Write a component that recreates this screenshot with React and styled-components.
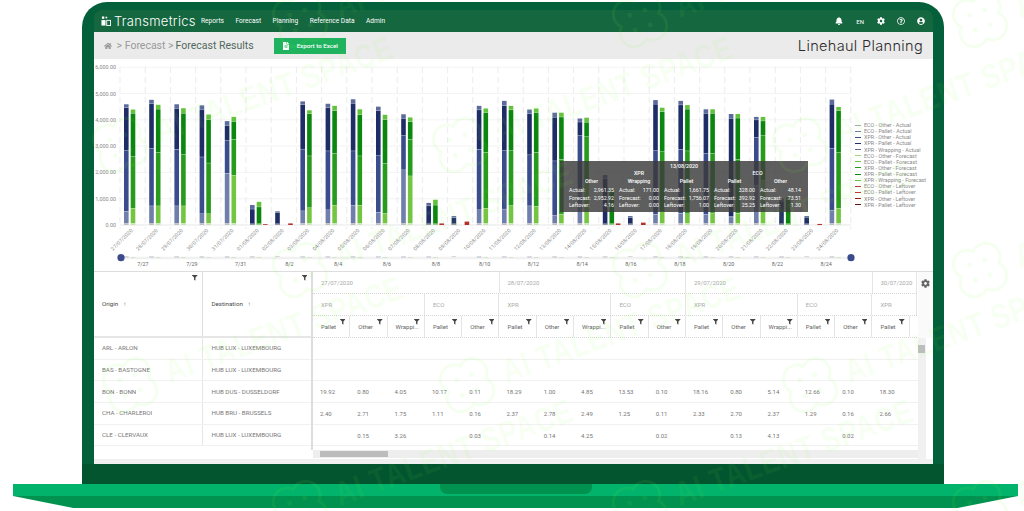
import React from 'react';
import styled, { createGlobalStyle } from 'styled-components';
import { FaBell, FaCog, FaUserCircle, FaHome, FaFileAlt, FaFilter, FaRegQuestionCircle } from 'react-icons/fa';

const GlobalStyle = createGlobalStyle`
  html, body { margin: 0; padding: 0; background: #fff; }
  body { font-family: Roboto, "Liberation Sans", sans-serif; }
  * { box-sizing: border-box; }
`;

const Page = styled.div`
  position: relative;
  width: 1024px;
  height: 511px;
  padding-top: 2px;
  overflow: hidden;
  background: #fff;
`;

const Laptop = styled.div`
  width: 862px;
  height: 482px;
  margin-left: 82px;
  padding: 8px 11px 0 12px;
  background: #03603a;
  border-radius: 25px 25px 0 0;
  border-bottom: 20px solid #03552f;
`;

const TopBar = styled.div`
  height: 22px;
  padding: 0 8px 0 7px;
  display: flex;
  align-items: center;
  color: #fff;
  background: #15673f;
  border-radius: 8px 8px 0 0;
`;

const Logo = styled.div`
  display: flex;
  align-items: center;
  gap: 3px;
  margin-right: 7px;
`;

const Brand = styled.span`
  font-family: Inter, sans-serif;
  font-weight: 300;
  font-size: 13px;
  letter-spacing: 0.3px;
  width: 80px;
`;

const NavLink = styled.span`
  font-size: 6.6px;
  font-weight: 400;
  margin-right: 11.5px;
`;

const TopIcons = styled.div`
  margin-left: auto;
  display: flex;
  align-items: center;
  gap: 12px;
  font-size: 8px;
  span { font-size: 6px; margin: 0 1px; }
`;

const Screen = styled.div`
  height: 432px;
  background: #fff;
  display: flex;
  flex-direction: column;
`;

const CrumbBar = styled.div`
  height: 27px;
  flex: none;
  padding: 0 10px 0 10px;
  background: #ebebeb;
  display: flex;
  align-items: center;
  font-size: 10.5px;
  color: #9a9a9a;
  gap: 2px;
`;

const CrumbCurrent = styled.span`
  color: #50695c;
`;

const ExportButton = styled.div`
  width: 72px;
  height: 16px;
  margin-left: 18px;
  padding-left: 8px;
  background: #1fb35f;
  color: #fff;
  display: flex;
  align-items: center;
  gap: 7px;
  font-size: 6.2px;
  font-weight: 500;
`;

const AppTitle = styled.div`
  margin-left: auto;
  font-family: Inter, sans-serif;
  font-weight: 300;
  font-size: 14.5px;
  letter-spacing: 0.35px;
  color: #2a2a2a;
`;

const ChartArea = styled.div`
  position: relative;
  flex: none;
  height: 213px;
  display: flex;
  border-bottom: 1px solid #ddd;
`;

const Legend = styled.ul`
  list-style: none;
  margin: 63px 0 0;
  padding: 0;
`;

const LegendItem = styled.li`
  display: flex;
  align-items: center;
  height: 6.13px;
  font-size: 5.4px;
  color: #8a8a8a;
  white-space: nowrap;
  &::before {
    content: '';
    width: 6px;
    height: 1px;
    margin-right: 3px;
    background: ${({ color }) => color};
  }
`;

const Tooltip = styled.div`
  position: absolute;
  left: 466px;
  top: 102px;
  width: 248px;
  height: 51px;
  padding: 2px 9px 0 9px;
  background: rgba(58, 58, 58, 0.82);
  color: #fff;
  font-size: 5.3px;
`;

const TooltipTitle = styled.div`
  text-align: center;
  font-weight: 500;
  height: 7px;
`;

const TooltipGroups = styled.div`
  display: flex;
  gap: 5px;
`;

const TooltipGroup = styled.div`
  text-align: center;
`;

const TooltipHead = styled.div`
  font-weight: 500;
  height: 8px;
`;

const TooltipSeries = styled.div`
  display: flex;
  gap: 5px;
`;

const TooltipCol = styled.div`
  width: ${({ width }) => width}px;
`;

const TooltipName = styled.div`
  font-weight: 500;
  height: 9px;
`;

const TooltipRow = styled.div`
  display: flex;
  justify-content: space-between;
  height: 7.6px;
`;

const TableArea = styled.div`
  flex: none;
  height: 187px;
  display: flex;
`;

const FrozenPane = styled.div`
  flex: none;
  width: 219px;
  height: 178px;
  border-right: 2px solid #ddd;
  display: flex;
  flex-direction: column;
`;

const FrozenHead = styled.div`
  display: flex;
  height: 66px;
  flex: none;
  border-bottom: 2px solid #e6e6e6;
`;

const FrozenHeadCell = styled.div`
  position: relative;
  width: 109px;
  padding-left: 8px;
  display: flex;
  align-items: center;
  gap: 5px;
  font-size: 6.2px;
  font-weight: 400;
  color: #4a4a4a;
  border-right: 1px solid #ddd;
  &:last-child { border-right: 0; padding-left: 9px; }
`;

const FilterMark = styled.span`
  position: absolute;
  top: 3px;
  right: 4px;
  font-size: 5.5px;
  color: #444;
  line-height: 1;
`;

const FrozenRow = styled.div`
  display: flex;
  height: 21.7px;
  flex: none;
  border-bottom: 1px solid #f1f1f1;
`;

const FrozenCell = styled.div`
  width: 109px;
  padding-left: 8px;
  display: flex;
  align-items: center;
  font-size: 6.2px;
  color: #777;
  border-right: 1px solid #e6e6e6;
  &:last-child { border-right: 0; padding-left: 9px; }
`;

const ScrollPane = styled.div`
  flex: none;
  width: 605px;
  overflow: hidden;
  display: flex;
  flex-direction: column;
`;

const HeadRow = styled.div`
  display: flex;
  flex: none;
  height: 22px;
  width: 620px;
  border-bottom: 1px dotted #d6d6d6;
`;

const SubHeadCell = styled.div`
  flex: none;
  width: ${({ span }) => span * 37.3}px;
  padding-left: 8px;
  display: flex;
  align-items: center;
  font-size: 6px;
  color: #aaa;
  border-right: 1px solid #e4e4e4;
`;

const ColHeadCell = styled.div`
  position: relative;
  flex: none;
  width: 37.3px;
  padding-left: 8px;
  display: flex;
  align-items: center;
  font-size: 6px;
  color: #666;
  border-right: 1px solid #e4e4e4;
`;

const BodyRow = styled.div`
  display: flex;
  flex: none;
  height: 21.7px;
  width: 620px;
  border-bottom: 1px solid #f1f1f1;
`;

const ValueCell = styled.div`
  flex: none;
  width: 37.3px;
  padding-left: 7px;
  display: flex;
  align-items: center;
  font-size: 6px;
  color: #777;
`;

const HScroll = styled.div`
  flex: none;
  height: 8px;
  margin-top: 4px;
  padding-left: 7px;
  background: #eeeeee;
`;

const HThumb = styled.div`
  width: 68px;
  height: 6px;
  margin-top: 1px;
  background: #bcbcbc;
`;

const SidePane = styled.div`
  flex: 1;
  display: flex;
  flex-direction: column;
`;

const SettingsCell = styled.div`
  height: 66px;
  flex: none;
  padding: 7px 0 0 3px;
  font-size: 9px;
  color: #666;
  background: #fafafa;
`;

const VScroll = styled.div`
  width: 8px;
  height: 121px;
  padding-top: 7px;
  background: #f1f1f1;
`;

const VThumb = styled.div`
  width: 7px;
  height: 8px;
  background: #bdbdbd;
`;

const BottomStrip = styled.div`
  flex: none;
  height: 5px;
  background: #f0f0f0;
`;

const BaseTop = styled.div`
  width: 1005px;
  height: 12px;
  margin-left: 13px;
  background: #02b36b;
  display: flex;
  justify-content: center;
`;

const Notch = styled.div`
  width: 152px;
  height: 10px;
  background: #02924f;
  border-radius: 0 0 7px 7px;
`;

const BaseBottom = styled.div`
  width: 1005px;
  height: 12px;
  margin-left: 13px;
  background: #02924f;
  clip-path: polygon(0 0, 100% 0, 94% 100%, 6% 100%);
`;

const Watermark = styled.div`
  position: absolute;
  left: ${({ x }) => x}px;
  top: ${({ y }) => y}px;
  display: flex;
  align-items: center;
  gap: 8px;
  transform: rotate(-20deg);
  transform-origin: 30px 30px;
  pointer-events: none;
  color: rgba(130, 255, 70, 0.08);
`;

const WatermarkText = styled.span`
  font-family: "Liberation Sans Narrow", "Liberation Sans", sans-serif;
  font-weight: 700;
  font-size: 34px;
  white-space: nowrap;
  letter-spacing: 1px;
  transform: scaleX(0.8);
  transform-origin: left center;
`;

const legend = [
  ['ECO - Other - Actual', '#a7a7b0'],
  ['ECO - Pallet - Actual', '#6f7eaa'],
  ['XPR - Other - Actual', '#3b4c8c'],
  ['XPR - Pallet - Actual', '#1f2d66'],
  ['XPR - Wrapping - Actual', '#5d6b9c'],
  ['ECO - Other - Forecast', '#9bd67a'],
  ['ECO - Pallet - Forecast', '#74c642'],
  ['XPR - Other - Forecast', '#279b1b'],
  ['XPR - Pallet - Forecast', '#0b860f'],
  ['XPR - Wrapping - Forecast', '#63c23c'],
  ['ECO - Other - Leftover', '#b5402f'],
  ['ECO - Pallet - Leftover', '#c0392b'],
  ['XPR - Other - Leftover', '#8c1d18'],
  ['XPR - Pallet - Leftover', '#5c1512']
];

const navyColors = ['#a7a7b0', '#6f7eaa', '#3b4c8c', '#1f2d66', '#5d6b9c'];
const greenColors = ['#b5dc9c', '#74c642', '#279b1b', '#0b860f', '#63c23c'];

// each bar: total, top of dark part, top of mid part, top of light part
const days = [
  { d: '27/07/2020', n: [4590, 4450, 2840, 510], g: [4390, 4240, 2610, 630] },
  { d: '28/07/2020', n: [4760, 4600, 2900, 720], g: [4570, 4400, 2750, 720] },
  { d: '29/07/2020', n: [4590, 4430, 2870, 720], g: [4440, 4240, 2670, 720] },
  { d: '30/07/2020', n: [4550, 4390, 2580, 420], g: [4200, 4000, 2350, 420] },
  { d: '31/07/2020', n: [3950, 3780, 3200, 1960], g: [4110, 3930, 3250, 1890] },
  { d: '01/08/2020', n: [760, 600, 0, 0], g: [880, 680, 0, 0], r: 30 },
  { d: '02/08/2020', n: [520, 470, 0, 0], r: 60 },
  { d: '03/08/2020', n: [4700, 4570, 2880, 530], g: [4360, 4220, 2620, 650] },
  { d: '04/08/2020', n: [4610, 4450, 2810, 570], g: [4530, 4340, 2710, 750] },
  { d: '05/08/2020', n: [4780, 4620, 2810, 750], g: [4400, 4190, 2620, 740] },
  { d: '06/08/2020', n: [4500, 4340, 2630, 480], g: [4190, 4000, 2330, 430] },
  { d: '07/08/2020', n: [4210, 4050, 3390, 2090], g: [4090, 3920, 3250, 1860] },
  { d: '08/08/2020', n: [840, 720, 0, 0], g: [960, 750, 0, 0], r: 60 },
  { d: '09/08/2020', n: [340, 270, 0, 0], r: 130 },
  { d: '10/08/2020', n: [4530, 4370, 2870, 570], g: [4430, 4270, 2750, 630] },
  { d: '11/08/2020', n: [4720, 4530, 2820, 600], g: [4530, 4370, 2820, 730] },
  { d: '12/08/2020', n: [4390, 4220, 2660, 720], g: [4430, 4270, 2750, 700] },
  { d: '13/08/2020', n: [4270, 4090, 2430, 370], g: [4270, 4100, 2490, 400] },
  { d: '14/08/2020', n: [4050, 3910, 3390, 1400], g: [4080, 3900, 3350, 1600] },
  { d: '15/08/2020', n: [1900, 1750, 0, 0], g: [1400, 1250, 0, 0], r: 60 },
  { d: '16/08/2020', n: [340, 280, 0, 0], r: 90 },
  { d: '17/08/2020', n: [4750, 4590, 2820, 400], g: [4460, 4300, 2780, 500] },
  { d: '18/08/2020', n: [4720, 4560, 2870, 440], g: [4560, 4400, 2810, 420] },
  { d: '19/08/2020', n: [4400, 4240, 2720, 400], g: [4400, 4240, 2720, 450] },
  { d: '20/08/2020', n: [4220, 4050, 320, 300], g: [4220, 4060, 2490, 440] },
  { d: '21/08/2020', n: [4110, 3990, 3330, 1500], g: [4110, 3950, 3390, 1700] },
  { d: '22/08/2020', n: [1000, 900, 0, 0], g: [1050, 950, 0, 0] },
  { d: '23/08/2020', n: [340, 290, 0, 0], r: 40 },
  { d: '24/08/2020', n: [4770, 4590, 2910, 540], g: [4490, 4340, 2760, 630] }
];

const yOf = v => 166 - v * 0.0263;
const xOf = i => 26 + i * 25.2;

const Stack = ({ x, tops, colors }) => {
  const edges = [tops[0], tops[1], tops[2], tops[3], 60, 0];
  const order = [4, 3, 2, 1, 0];
  return order.map((c, k) => {
    const h = (edges[k] - edges[k + 1]) * 0.0263;
    if (h <= 0) return null;
    return (
      <rect
        key={c}
        x={x}
        y={yOf(edges[k])}
        width="4.6"
        height={Math.max(h - 0.3, 0.4)}
        fill={colors[c]}
      />
    );
  });
};

const axisLabels = ['7/27', '7/29', '7/31', '8/2', '8/4', '8/6', '8/8', '8/10', '8/12', '8/14', '8/16', '8/18', '8/20', '8/22', '8/24'];

const ChartDrawing = () => (
  <svg width="761" height="211" viewBox="0 0 761 211" style={{ flex: 'none' }} fontFamily="Roboto, sans-serif">
    {[0, 1, 2, 3, 4, 5, 6].map(k => (
      <g key={k}>
        <line x1="26" x2="757" y1={yOf(k * 1000)} y2={yOf(k * 1000)} stroke={k ? '#efefef' : '#dcdcdc'} strokeWidth="0.7" />
        <text x="22" y={yOf(k * 1000) + 2} fontSize="5.4" fill="#888" textAnchor="end">
          {k === 0 ? '0.00' : `${k},000.00`}
        </text>
      </g>
    ))}
    {days.map((_, i) => (
      <line key={i} x1={xOf(i)} x2={xOf(i)} y1="8" y2="170" stroke="#e4e4e4" strokeWidth="0.7" strokeDasharray="6 4" />
    ))}
    <line x1={xOf(29)} x2={xOf(29)} y1="8" y2="170" stroke="#e4e4e4" strokeWidth="0.7" strokeDasharray="6 4" />
    {days.map((day, i) => (
      <g key={day.d}>
        <Stack x={xOf(i) + 4} tops={day.n} colors={navyColors} />
        {day.g && <Stack x={xOf(i) + 10.7} tops={day.g} colors={greenColors} />}
        {day.r && <rect x={xOf(i) + 17} y={yOf(day.r)} width="4.6" height={day.r * 0.0263} fill="#b5302a" />}
        <text
          x={xOf(i) + 13}
          y="172"
          fontSize="5.3"
          fill="#8c8c8c"
          textAnchor="end"
          transform={`rotate(-45 ${xOf(i) + 13} 172)`}
        >
          {day.d}
        </text>
        <rect x={xOf(i) + 4} y="197.5" width="4.6" height={day.g ? 1.5 : 0.6} fill="#aab" />
        {day.g && <rect x={xOf(i) + 10.7} y="198" width="4.6" height="1" fill="#9bd67a" />}
      </g>
    ))}
    <line x1="27" x2="757" y1="199" y2="199" stroke="#ececec" strokeWidth="2.4" opacity="0.7" />
    <circle cx="27" cy="198.7" r="3.6" fill="#3a4a8a" />
    <circle cx="757" cy="198.7" r="3.6" fill="#3a4a8a" />
    {axisLabels.map((l, i) => (
      <text key={l} x={49 + i * 48.8} y="207" fontSize="5.4" fill="#666" textAnchor="middle">{l}</text>
    ))}
  </svg>
);

const tipGroups = [
  {
    name: 'XPR',
    series: [
      { name: 'Other', width: 45, values: ['2,961.35', '2,952.92', '4.16'] },
      { name: 'Wrapping', width: 40, values: ['171.00', '0.00', '0.00'] },
      { name: 'Pallet', width: 45, values: ['1,661.75', '1,756.07', '1.00'] }
    ]
  },
  {
    name: 'ECO',
    series: [
      { name: 'Pallet', width: 41, values: ['328.00', '392.92', '25.25'] },
      { name: 'Other', width: 41, values: ['48.14', '73.51', '1.30'] }
    ]
  }
];
const tipLabels = ['Actual:', 'Forecast:', 'Leftover:'];

const ChartTooltip = () => (
  <Tooltip>
    <TooltipTitle>13/08/2020</TooltipTitle>
    <TooltipGroups>
      {tipGroups.map(group => (
        <TooltipGroup key={group.name}>
          <TooltipHead>{group.name}</TooltipHead>
          <TooltipSeries>
            {group.series.map(s => (
              <TooltipCol key={s.name} width={s.width}>
                <TooltipName>{s.name}</TooltipName>
                {s.values.map((v, i) => (
                  <TooltipRow key={i}>
                    <span>{tipLabels[i]}</span>
                    <span>{v}</span>
                  </TooltipRow>
                ))}
              </TooltipCol>
            ))}
          </TooltipSeries>
        </TooltipGroup>
      ))}
    </TooltipGroups>
  </Tooltip>
);

const rowsLeft = [
  ['ARL - ARLON', 'HUB LUX - LUXEMBOURG'],
  ['BAS - BASTOGNE', 'HUB LUX - LUXEMBOURG'],
  ['BON - BONN', 'HUB DUS - DUSSELDORF'],
  ['CHA - CHARLEROI', 'HUB BRU - BRUSSELS'],
  ['CLE - CLERVAUX', 'HUB LUX - LUXEMBOURG']
];

const dates = ['27/07/2020', '28/07/2020', '29/07/2020'];
const colNames = ['Pallet', 'Other', 'Wrappi...', 'Pallet', 'Other'];

const values = [
  [],
  [],
  ['19.92', '0.80', '4.05', '10.17', '0.11', '18.29', '1.00', '4.85', '13.53', '0.10', '18.16', '0.80', '5.14', '12.66', '0.10', '18.30'],
  ['2.40', '2.71', '1.75', '1.11', '0.16', '2.37', '2.78', '2.49', '1.25', '0.11', '2.33', '2.70', '2.37', '1.29', '0.16', '2.66'],
  ['', '0.15', '3.26', '', '0.03', '', '0.14', '4.25', '', '0.02', '', '0.13', '4.13', '', '0.02', '']
];

const Clover = () => (
  <svg width="60" height="60" viewBox="0 0 60 60" fill="none" stroke="currentColor" strokeWidth="3">
    <path d="M30 10.2A14 14 0 1 1 49.8 30A14 14 0 1 1 30 49.8A14 14 0 1 1 10.2 30A14 14 0 1 1 30 10.2Z" />
    <circle cx="22" cy="22" r="2.5" fill="currentColor" stroke="none" />
    <circle cx="38" cy="22" r="2.5" fill="currentColor" stroke="none" />
    <circle cx="22" cy="38" r="2.5" fill="currentColor" stroke="none" />
    <circle cx="38" cy="38" r="2.5" fill="currentColor" stroke="none" />
  </svg>
);

const App = () => (
  <Page>
    <GlobalStyle />
    <Laptop>
      <TopBar>
        <Logo>
          <svg width="10" height="10" viewBox="0 0 11 11">
            <rect x="1" y="0.5" width="2.6" height="2.6" fill="#fff" />
            <rect x="5" y="0.8" width="1.8" height="1.8" fill="#fff" />
            <rect x="0.5" y="4.5" width="4.5" height="6" fill="#fff" />
            <rect x="6.3" y="4.8" width="4.2" height="5.7" fill="none" stroke="#fff" strokeWidth="1" />
          </svg>
          <Brand>Transmetrics</Brand>
        </Logo>
        <NavLink>Reports</NavLink>
        <NavLink>Forecast</NavLink>
        <NavLink>Planning</NavLink>
        <NavLink>Reference Data</NavLink>
        <NavLink>Admin</NavLink>
        <TopIcons>
          <FaBell />
          <span>EN</span>
          <FaCog />
          <FaRegQuestionCircle />
          <FaUserCircle />
        </TopIcons>
      </TopBar>
      <Screen>
        <CrumbBar>
          <FaHome size={8} />
          <span>&nbsp;&gt; Forecast &gt;</span>
          <CrumbCurrent>Forecast Results</CrumbCurrent>
          <ExportButton>
            <FaFileAlt size={8} />
            Export to Excel
          </ExportButton>
          <AppTitle>Linehaul Planning</AppTitle>
        </CrumbBar>
        <ChartArea>
          <ChartDrawing />
          <Legend>
            {legend.map(([label, color]) => (
              <LegendItem key={label} color={color}>{label}</LegendItem>
            ))}
          </Legend>
          <ChartTooltip />
        </ChartArea>
        <TableArea>
          <FrozenPane>
            <FrozenHead>
              <FrozenHeadCell>
                Origin <span>↑</span>
                <FilterMark><FaFilter /></FilterMark>
              </FrozenHeadCell>
              <FrozenHeadCell>
                Destination <span>↑</span>
                <FilterMark><FaFilter /></FilterMark>
              </FrozenHeadCell>
            </FrozenHead>
            {rowsLeft.map(([from, to]) => (
              <FrozenRow key={from}>
                <FrozenCell>{from}</FrozenCell>
                <FrozenCell>{to}</FrozenCell>
              </FrozenRow>
            ))}
          </FrozenPane>
          <ScrollPane>
            <HeadRow>
              {dates.map(d => <SubHeadCell key={d} span={5}>{d}</SubHeadCell>)}
              <SubHeadCell span={1.2}>30/07/2020</SubHeadCell>
            </HeadRow>
            <HeadRow>
              {dates.map(d => (
                <React.Fragment key={d}>
                  <SubHeadCell span={3}>XPR</SubHeadCell>
                  <SubHeadCell span={2}>ECO</SubHeadCell>
                </React.Fragment>
              ))}
              <SubHeadCell span={1.2}>XPR</SubHeadCell>
            </HeadRow>
            <HeadRow>
              {dates.map(d =>
                colNames.map((name, i) => (
                  <ColHeadCell key={d + i}>
                    {name}
                    <FilterMark><FaFilter /></FilterMark>
                  </ColHeadCell>
                ))
              )}
              <ColHeadCell>
                Pallet
                <FilterMark><FaFilter /></FilterMark>
              </ColHeadCell>
            </HeadRow>
            {values.map((row, r) => (
              <BodyRow key={r}>
                {row.map((v, i) => <ValueCell key={i}>{v}</ValueCell>)}
              </BodyRow>
            ))}
            <HScroll><HThumb /></HScroll>
          </ScrollPane>
          <SidePane>
            <SettingsCell><FaCog /></SettingsCell>
            <VScroll><VThumb /></VScroll>
          </SidePane>
        </TableArea>
        <BottomStrip />
      </Screen>
    </Laptop>
    <BaseTop><Notch /></BaseTop>
    <BaseBottom />
    {[
      [270, -10], [610, -10], [950, -10],
      [90, 115], [430, 115], [770, 115],
      [270, 240], [610, 240], [950, 240],
      [100, 355], [437, 355], [780, 355],
      [270, 478], [610, 478], [950, 478]
    ].map(([x, y]) => (
      <Watermark key={`${x}-${y}`} x={x} y={y}>
        <Clover />
        <WatermarkText>AI TALENT SPACE</WatermarkText>
      </Watermark>
    ))}
  </Page>
);

export default App;
